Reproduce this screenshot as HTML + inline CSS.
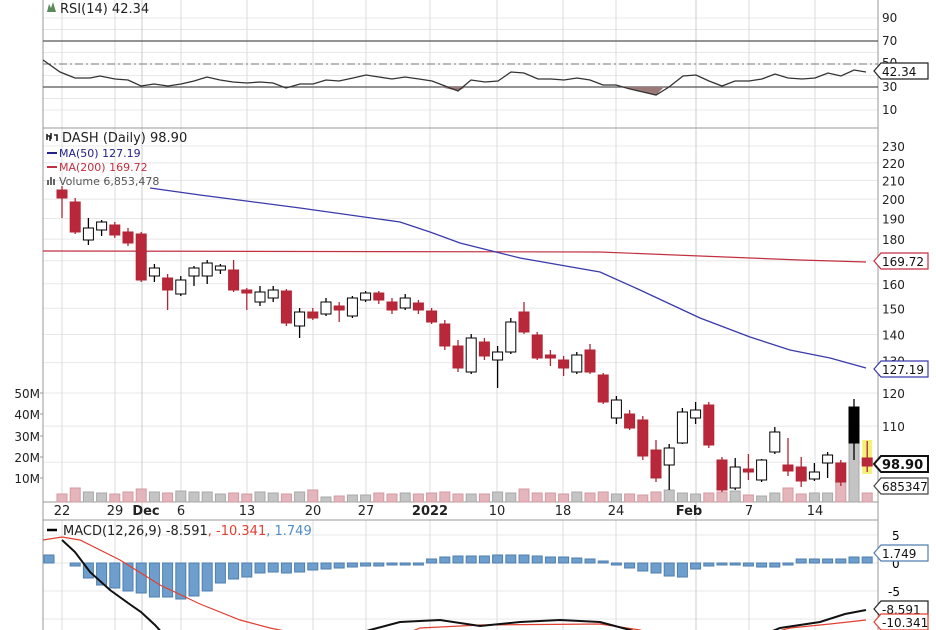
<!DOCTYPE html>
<html><head><meta charset="utf-8"><style>
body{margin:0;background:#fff;width:936px;height:630px;overflow:hidden}
svg{display:block;font-family:"DejaVu Sans","Liberation Sans",sans-serif}
</style></head><body>
<svg id="s" width="936" height="630" xmlns="http://www.w3.org/2000/svg"></svg>
<script>
const s=document.getElementById('s');let h='';
const L=43,R=878;
const X=i=>62+13.2*i;
const Y=p=>146+379.7*Math.log(230/p);
const vx=[62,115,181,247,313,366,430,497,563,616,696,749,815];
for(let r=10;r<=90;r+=10){const y=87-(r-30)*1.15;h+=`<line x1="${L}" x2="${R}" y1="${y}" y2="${y}" stroke="#e8e8e8"/>`;}
for(let p=100;p<=230;p+=10){h+=`<line x1="${L}" x2="${R}" y1="${Y(p)}" y2="${Y(p)}" stroke="#e8e8e8"/>`;}
[535,563,591,619].forEach(y=>h+=`<line x1="${L}" x2="${R}" y1="${y}" y2="${y}" stroke="#e8e8e8"/>`);
vx.forEach(x=>{h+=`<line x1="${x}" x2="${x}" y1="0" y2="128" stroke="#ddd"/><line x1="${x}" x2="${x}" y1="128" y2="502" stroke="#ddd"/><line x1="${x}" x2="${x}" y1="520" y2="630" stroke="#ddd"/>`;});
[142,696].forEach(x=>h+=`<line x1="${x}" x2="${x}" y1="0" y2="630" stroke="#ccc"/>`);
h+=`<line x1="${L}" x2="${L}" y1="0" y2="630" stroke="#999"/><line x1="${R}" x2="${R}" y1="0" y2="630" stroke="#999"/>`;
h+=`<line x1="${L}" x2="${R}" y1="128" y2="128" stroke="#999"/><line x1="${L}" x2="${R}" y1="502" y2="502" stroke="#999"/><line x1="${L}" x2="${R}" y1="520" y2="520" stroke="#999"/>`;
h+=`<line x1="${L}" x2="${R}" y1="41" y2="41" stroke="#555" stroke-width="1.3"/><line x1="${L}" x2="${R}" y1="87" y2="87" stroke="#555" stroke-width="1.3"/><line x1="${L}" x2="${R}" y1="64" y2="64" stroke="#777" stroke-dasharray="8,3,2,3"/>`;
const rsi=[[43,60],[60,72],[75,78],[90,78],[100,76],[115,79],[128,80],[141,86],[154,84],[168,86],[181,84],[194,81],[207,77],[220,80],[233,82],[247,83],[260,82],[273,83],[286,88],[300,84],[313,84],[326,80],[339,81],[353,78],[366,75],[379,77],[392,79],[405,77],[419,79],[432,81],[445,86],[458,91],[471,80],[485,82],[498,81],[511,72],[524,73],[538,79],[551,79],[564,80],[577,78],[590,80],[603,85],[616,85],[630,89],[643,92],[656,95],[669,87],[683,76],[696,75],[709,81],[722,86],[735,81],[749,81],[762,79],[775,74],[788,78],[802,79],[815,78],[828,73],[841,76],[854,70],[866,72]];
h+=`<polygon points="440,87 458,91 466,87" fill="#9a7a78"/><polygon points="622,87 656,95 664,87" fill="#9a7a78"/>`;
h+=`<polyline fill="none" stroke="#333" stroke-width="1.3" points="${rsi.map(p=>p.join(',')).join(' ')}"/>`;
const vol=[8,14,10,9,8,10,13,10,9,11,10,10,8,9,8,10,9,8,10,12,5,6,7,7,9,8,9,8,9,10,8,8,8,10,9,13,9,9,8,10,9,10,8,8,7,10,12,9,8,9,10,11,7,6,9,14,8,9,9,20,95,9];
const c=[[190,198,186,218,1],[202,232,198,234,1],[240,228,218,245,0],[230,222,220,236,0],[225,235,222,238,1],[232,243,228,246,1],[234,280,232,282,1],[276,268,264,282,0],[278,290,274,310,1],[294,280,276,296,0],[276,268,266,286,0],[276,263,260,284,0],[270,266,264,274,0],[270,290,260,292,1],[290,293,288,310,1],[302,292,286,306,0],[298,290,286,302,0],[291,323,289,326,1],[326,312,308,338,0],[312,318,308,320,1],[314,302,298,316,0],[306,310,302,322,1],[316,298,296,318,0],[300,293,291,302,0],[293,300,291,304,1],[302,310,298,314,1],[308,298,294,310,0],[303,310,300,314,1],[311,322,308,324,1],[324,346,320,350,1],[346,368,340,372,1],[372,338,334,374,0],[342,356,338,360,1],[360,352,346,388,0],[352,322,318,354,0],[312,332,302,334,1],[335,358,332,360,1],[355,358,350,366,1],[360,368,356,376,1],[372,355,352,374,0],[350,372,344,374,1],[375,402,373,404,1],[418,400,396,424,0],[414,428,410,430,1],[420,456,416,460,1],[450,478,440,482,1],[465,448,444,490,0],[443,412,408,444,0],[418,410,402,424,0],[405,445,402,448,1],[460,490,457,492,1],[488,467,458,490,0],[469,472,454,480,1],[480,460,459,482,0],[452,432,427,454,0],[465,471,438,476,1],[467,481,457,487,1],[479,472,463,481,0],[463,455,452,478,0],[463,482,460,486,1],[443,407,399,460,2],[458,466,441,472,1]];
h+=`<rect x="${X(61)-5}" y="440" width="10" height="34" fill="#f4f07a"/>`;
vol.forEach((v,i)=>{const red=c[i][4]==1;h+=`<rect x="${X(i)-5}" y="${502-v}" width="10" height="${v}" fill="${red?'#e4b6bc':'#c4c4c4'}" stroke="${red?'#d29aa2':'#a8a8a8'}"/>`;});
h+=`<polyline fill="none" stroke="#c23040" stroke-width="1.2" points="43,251 600,252 700,256 800,260 866,262"/>`;
h+=`<polyline fill="none" stroke="#3a3aaa" stroke-width="1.3" points="150,188 200,195 300,208 400,222 430,232 460,243 520,258 560,265 600,272 640,290 700,318 750,337 790,350 830,358 866,368"/>`;
c.forEach((k,i)=>{const x=X(i);const t=Math.min(k[0],k[1]),b=Math.max(k[0],k[1]);
 h+=`<line x1="${x}" x2="${x}" y1="${k[2]}" y2="${k[3]}" stroke="${k[4]==1?'#b02535':'#000'}" stroke-width="1.3"/>`;
 const f=k[4]==1?'#b8283a':(k[4]==2?'#000':'#fff');
 h+=`<rect x="${x-5}" y="${t}" width="10" height="${Math.max(b-t,2)}" fill="${f}" stroke="${k[4]==1?'#b02535':'#000'}"/>`;});
const hist=[8,-3,-15,-22,-25,-28,-30,-34,-34,-36,-33,-28,-20,-16,-14,-10,-9,-10,-9,-7,-6,-5,-4,-3,-3,-2,-2,-2,4,6,7,7,7,8,8,8,7,6,6,5,4,2,-2,-5,-8,-10,-13,-14,-6,-3,-2,-2,-3,-4,-4,-2,4,4,4,4,6,6];
hist.forEach((v,i)=>{const x=i==0?49:X(i);const y=v>0?563-v:563;h+=`<rect x="${x-5}" y="${y}" width="10" height="${Math.abs(v)||1}" fill="#6e9ecc" stroke="#4f7fae"/>`;});
h+=`<polyline fill="none" stroke="#e04030" stroke-width="1.2" points="43,540 62,537 80,540 120,560 160,585 200,604 240,620 270,628 300,634 400,636 420,628 480,625 600,624 640,630 660,636 760,636 790,628 830,624 866,620"/>`;
h+=`<polyline fill="none" stroke="#111" stroke-width="2" points="62,540 75,552 90,572 110,590 128,603 141,612 155,625 165,636 350,636 370,630 400,622 440,620 480,626 520,622 560,620 600,622 630,630 650,636 760,636 780,628 820,622 845,614 866,610"/>`;
h+=`<text x="60" y="13" font-size="13" fill="#222">RSI(14) 42.34</text><path d="M47 12 L49 4 L51 8 L53 2 L56 12Z" fill="#5a8a5a"/>`;
h+=`<text x="62" y="142" font-size="13" fill="#222">DASH (Daily) 98.90</text><path d="M47 134 V140 M47 136 H50 V141 M51 133 V139 M54 135 H57 V141" stroke="#222" stroke-width="1.6" fill="none"/>`;
h+=`<line x1="47" x2="57" y1="153" y2="153" stroke="#22228a" stroke-width="2"/><text x="59" y="157" font-size="11" fill="#22228a">MA(50) 127.19</text>`;
h+=`<line x1="47" x2="57" y1="167" y2="167" stroke="#c23040" stroke-width="2"/><text x="59" y="171" font-size="11" fill="#c23040">MA(200) 169.72</text>`;
h+=`<rect x="47" y="180" width="2" height="5" fill="#666"/><rect x="50" y="177" width="2" height="8" fill="#666"/><rect x="53" y="179" width="2" height="6" fill="#666"/><text x="59" y="185" font-size="11" fill="#555">Volume 6,853,478</text>`;
h+=`<line x1="47" x2="57" y1="530" y2="530" stroke="#000" stroke-width="2.5"/><text x="63" y="535" font-size="13" fill="#222">MACD(12,26,9) -8.591<tspan fill="#e04030">, -10.341</tspan><tspan fill="#4f8fd0">, 1.749</tspan></text>`;
[[90,22],[70,45],[50,67],[30,91],[10,114]].forEach(a=>h+=`<text x="882" y="${a[1]}" font-size="12" fill="#222">${a[0]}</text>`);
for(let p=110;p<=230;p+=10){if(p==130||p==170)continue;h+=`<text x="882" y="${Y(p)+5}" font-size="12" fill="#222">${p}</text>`;}
h+=`<text x="882" y="${Y(130)+3}" font-size="12" fill="#222">130</text>`;
h+=`<text x="892" y="540" font-size="12">5</text><text x="892" y="568" font-size="12">0</text><text x="888" y="596" font-size="12">-5</text>`;
function co(y,t,col,bold){h+=`<path d="M874 ${y} L881 ${y-8} H928 V${y+8} H881Z" fill="#fff" stroke="${col}" stroke-width="${bold?2:1.2}"/><text x="882" y="${y+5}" font-size="${bold?13:12}" ${bold?'font-weight="bold"':''} fill="#111">${t}</text>`;}
co(71,'42.34','#222');co(261,'169.72','#c23040');co(369,'127.19','#3a3aaa');co(464,'98.90','#111',1);co(486,'685347','#444');co(553,'1.749','#4f7fae');co(609,'-8.591','#222');co(622,'-10.341','#e04030');
[[50,393],[40,414],[30,436],[20,457],[10,478]].forEach(a=>h+=`<text x="40" y="${a[1]+5}" font-size="12" text-anchor="end" fill="#222">${a[0]}M</text><line x1="40" x2="43" y1="${a[1]}" y2="${a[1]}" stroke="#999"/>`);
[[62,'22'],[115,'29'],[146,'Dec',1],[181,'6'],[247,'13'],[313,'20'],[366,'27'],[430,'2022',1],[497,'10'],[563,'18'],[616,'24'],[689,'Feb',1],[749,'7'],[815,'14']].forEach(d=>h+=`<text x="${d[0]}" y="515" font-size="13" text-anchor="middle" ${d[2]?'font-weight="bold"':''} fill="#222">${d[1]}</text>`);
s.innerHTML=h;
</script>
</body></html>
